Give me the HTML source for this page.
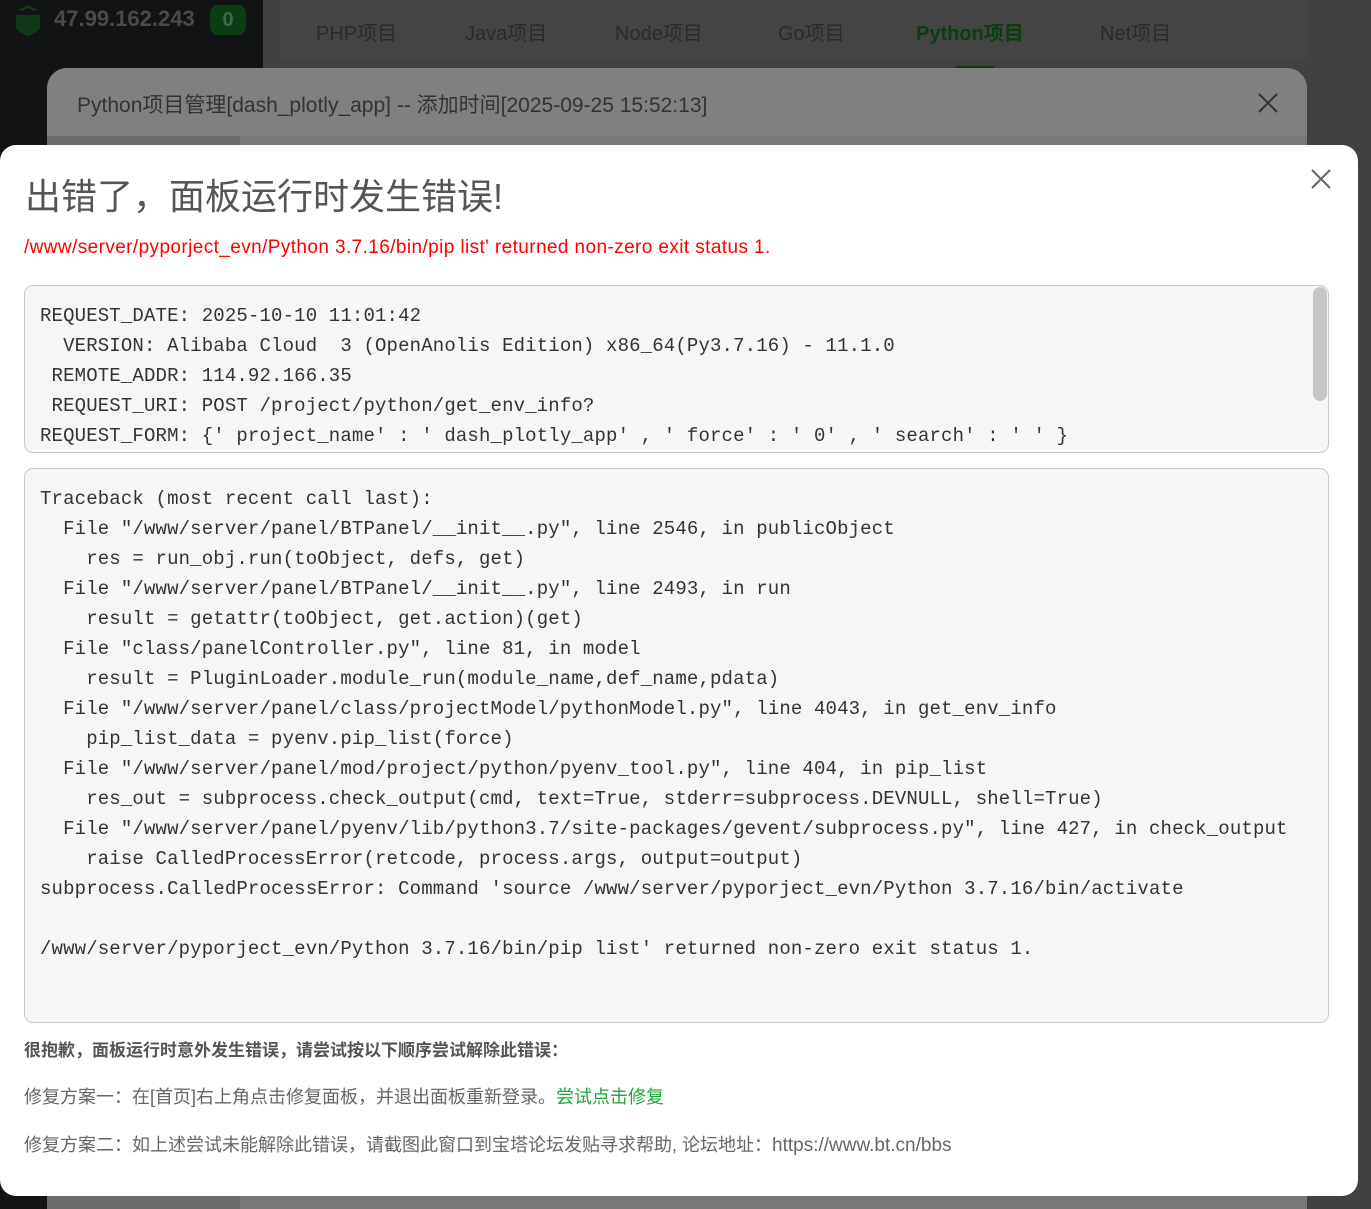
<!DOCTYPE html>
<html><head><meta charset="utf-8"><style>
*{margin:0;padding:0;box-sizing:border-box}
html,body{width:1371px;height:1209px;overflow:hidden}
body{background:#414141;position:relative;font-family:"Liberation Sans","Noto Sans CJK SC",sans-serif}
.side{position:absolute;left:0;top:0;width:263px;height:1209px;background:#111315}
.ip{position:absolute;left:54px;top:6px;font-size:22px;font-weight:bold;color:#4a4a4a}
.badge{position:absolute;left:210px;top:5px;width:36px;height:30px;border-radius:8px;background:#0b3d12;color:#3e6b44;font-weight:bold;font-size:20px;text-align:center;line-height:30px}
.tabs{position:absolute;left:280px;top:0;width:1030px;height:62px;background:#444}
.tab{position:absolute;top:17px;font-size:20px;color:#2a2a2a}
.under{position:absolute;left:47px;top:68px;width:1260px;height:1141px;background:#787878;border-radius:20px 20px 0 0;overflow:hidden}
.under .hd{height:68px;background:#808080;border-radius:20px 20px 0 0;font-size:21px;color:#333;padding:21px 0 0 30px}
.under .lp{position:absolute;left:0;top:68px;width:193px;height:1073px;background:#6b6b6b}
.modal{position:absolute;left:0;top:145px;width:1358px;height:1051px;background:#fff;border-radius:16px}
h1{position:absolute;left:25px;top:30px;font-size:36px;font-weight:normal;color:#555;line-height:44px}
.red{position:absolute;left:24px;top:92px;font-size:19px;color:#f00;letter-spacing:0.4px}
.box{position:absolute;left:24px;width:1305px;background:#f6f6f6;border:1px solid #c9c8d2;border-radius:9px;font-family:"Liberation Mono",monospace;font-size:19px;letter-spacing:0.15px;line-height:30px;color:#333;padding:15px 15px;white-space:pre;overflow:hidden}
.sb{position:absolute;right:1px;top:1px;width:14px;height:114px;background:#c6c6c6;border-radius:7px}
.f{position:absolute;left:24px;font-size:18px;color:#666}
</style></head><body>
<div class="side">
<svg style="position:absolute;left:14px;top:4px" width="28" height="32" viewBox="0 0 28 32"><path d="M4 6 L14 1 L24 6 L20 7 L14 4 L8 7Z M2 11 L26 11 L26 22 Q26 28 14 32 Q2 28 2 22Z" fill="#0d3a14"/></svg>
<div class="ip">47.99.162.243</div><div class="badge">0</div>
</div>
<div class="tabs">
<div class="tab" style="left:36px">PHP项目</div>
<div class="tab" style="left:185px">Java项目</div>
<div class="tab" style="left:335px">Node项目</div>
<div class="tab" style="left:498px">Go项目</div>
<div class="tab" style="left:636px;color:#0c3d10;font-weight:bold">Python项目</div>
<div class="tab" style="left:820px">Net项目</div>
<div style="position:absolute;left:676px;top:66px;width:38px;height:2px;background:#0c3d10"></div>
</div>
<div class="under"><div class="hd">Python项目管理[dash_plotly_app] -- 添加时间[2025-09-25 15:52:13]</div><div class="lp"></div>
<svg style="position:absolute;left:1210px;top:24px" width="22" height="22"><path d="M2 2L20 20M20 2L2 20" stroke="#333" stroke-width="2"/></svg></div>
<div class="modal">
<svg style="position:absolute;left:1311px;top:24px" width="20" height="20"><path d="M1 1L19 19M19 1L1 19" stroke="#666" stroke-width="2"/></svg>
<h1>出错了，面板运行时发生错误!</h1>
<div class="red">/www/server/pyporject_evn/Python 3.7.16/bin/pip list' returned non-zero exit status 1.</div>
<div class="box" style="top:140px;height:168px">REQUEST_DATE: 2025-10-10 11:01:42
  VERSION: Alibaba Cloud  3 (OpenAnolis Edition) x86_64(Py3.7.16) - 11.1.0
 REMOTE_ADDR: 114.92.166.35
 REQUEST_URI: POST /project/python/get_env_info?
REQUEST_FORM: {′ project_name′ : ′ dash_plotly_app′ , ′ force′ : ′ 0′ , ′ search′ : ′ ′ }<div class="sb"></div></div>
<div class="box" style="top:323px;height:555px">Traceback (most recent call last):
  File "/www/server/panel/BTPanel/__init__.py", line 2546, in publicObject
    res = run_obj.run(toObject, defs, get)
  File "/www/server/panel/BTPanel/__init__.py", line 2493, in run
    result = getattr(toObject, get.action)(get)
  File "class/panelController.py", line 81, in model
    result = PluginLoader.module_run(module_name,def_name,pdata)
  File "/www/server/panel/class/projectModel/pythonModel.py", line 4043, in get_env_info
    pip_list_data = pyenv.pip_list(force)
  File "/www/server/panel/mod/project/python/pyenv_tool.py", line 404, in pip_list
    res_out = subprocess.check_output(cmd, text=True, stderr=subprocess.DEVNULL, shell=True)
  File "/www/server/panel/pyenv/lib/python3.7/site-packages/gevent/subprocess.py", line 427, in check_output
    raise CalledProcessError(retcode, process.args, output=output)
subprocess.CalledProcessError: Command 'source /www/server/pyporject_evn/Python 3.7.16/bin/activate

/www/server/pyporject_evn/Python 3.7.16/bin/pip list' returned non-zero exit status 1.</div>
<div class="f" style="top:891px;font-weight:bold;color:#555;font-size:17px">很抱歉，面板运行时意外发生错误，请尝试按以下顺序尝试解除此错误：</div>
<div class="f" style="top:938px">修复方案一：在[首页]右上角点击修复面板，并退出面板重新登录。<span style="color:#20a53a">尝试点击修复</span></div>
<div class="f" style="top:986px">修复方案二：如上述尝试未能解除此错误，请截图此窗口到宝塔论坛发贴寻求帮助, 论坛地址：<span style="font-size:19px">https://www.bt.cn/bbs</span></div>
</div>
</body></html>
